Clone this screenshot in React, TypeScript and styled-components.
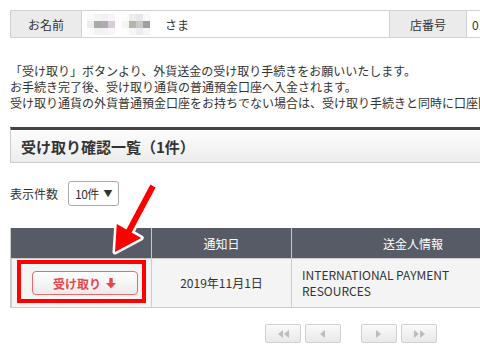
import styled, { createGlobalStyle } from "styled-components";

const GlobalStyle = createGlobalStyle`
  html, body {
    margin: 0;
    padding: 0;
    background: #fff;
    overflow: hidden;
  }
  body {
    font-family: "Noto Sans CJK JP", "Noto Sans", sans-serif;
    font-size: 12px;
    color: #333;
  }
`;

const Page = styled.div`
  position: relative;
  width: 682px;
  padding: 10px 0 0 10px;
`;

const InfoTable = styled.div`
  display: grid;
  grid-template-columns: 70px 308px 77px 1fr;
  height: 28px;
  border: 1px solid #d2d2d2;
  box-sizing: border-box;
`;

const InfoCell = styled.div<{ $head?: boolean }>`
  display: flex;
  align-items: center;
  justify-content: ${(p) => (p.$head ? "center" : "flex-start")};
  padding: ${(p) => (p.$head ? "0" : "0 5px")};
  background: ${(p) => (p.$head ? "#ebebeb" : "#fff")};
  border-left: 1px solid #d2d2d2;
  font-size: 12px;
  color: #333;
  &:first-child {
    border-left: none;
  }
`;

const Mosaic = styled.div`
  display: grid;
  grid-template-columns: repeat(4, 7px);
  grid-template-rows: repeat(3, 7px);
  margin-right: 7px;
`;

const Pixel = styled.span<{ $c: string }>`
  background: ${(p) => p.$c};
`;

const Notice = styled.p`
  margin: 25px 0 0;
  font-size: 12px;
  line-height: 16px;
  white-space: nowrap;
  color: #333;
`;

const SectionHeader = styled.div`
  margin-top: 16px;
  height: 36px;
  box-sizing: border-box;
  border-top: 3px solid #444;
  border-left: 1px solid #ccc;
  border-right: 1px solid #ccc;
  border-bottom: 1px solid #ccc;
  background: linear-gradient(#fdfdfd, #ececec);
  display: flex;
  align-items: center;
  padding-left: 10px;
  font-size: 15px;
  font-weight: bold;
  color: #333;
`;

const Controls = styled.div`
  display: flex;
  align-items: center;
  gap: 10px;
  margin-top: 18px;
  height: 25px;
`;

const FakeSelect = styled.div`
  width: 51px;
  height: 25px;
  box-sizing: border-box;
  border: 1px solid #aaa;
  border-radius: 3px;
  display: flex;
  align-items: center;
  justify-content: space-between;
  padding: 0 6px 0 6px;
  font-size: 12px;
  letter-spacing: -0.5px;
  color: #333;
  background: #fff;
`;

const Caret = styled.span`
  font-size: 9px;
  color: #333;
`;

const Table = styled.div`
  margin-top: 22px;
  display: grid;
  grid-template-columns: 140px 140px 243px 1fr;
  border: 1px solid #ccc;
  border-top: none;
`;

const HeadCell = styled.div`
  height: 30px;
  background: #565b66;
  color: #fff;
  display: flex;
  align-items: center;
  justify-content: center;
  font-size: 12px;
  border-left: 1px solid #c8c8c8;
  &:first-child {
    border-left: none;
  }
`;

const BodyCell = styled.div<{ $align?: string }>`
  height: 48px;
  background: #f4f4f4;
  display: flex;
  align-items: center;
  justify-content: ${(p) => p.$align || "center"};
  padding: ${(p) => (p.$align === "flex-start" ? "0 10px" : "0")};
  border-left: 1px solid #ccc;
  border-top: 1px solid #ccc;
  font-size: 12px;
  line-height: 16px;
  color: #333;
  &:first-child {
    border-left: none;
  }
`;

const ReceiveButton = styled.button`
  width: 106px;
  height: 24px;
  margin-left: 6px;
  border: 1px solid #e86a6a;
  border-radius: 4px;
  background: linear-gradient(#ffffff, #ebebeb);
  color: #e6484b;
  font-family: inherit;
  font-size: 12px;
  font-weight: bold;
  display: flex;
  align-items: center;
  justify-content: center;
  gap: 5px;
  cursor: pointer;
`;

const Pager = styled.div`
  display: flex;
  justify-content: center;
  gap: 4px;
  margin-top: 16px;
`;

const PagerGap = styled.span`
  width: 12px;
`;

const PageButton = styled.div`
  width: 36px;
  height: 19px;
  box-sizing: border-box;
  border: 1px solid #d0d0d0;
  border-radius: 2px;
  background: linear-gradient(#fafafa, #e9e9e9);
  display: flex;
  align-items: center;
  justify-content: center;
`;

const Overlay = styled.svg`
  position: absolute;
  left: 0;
  top: 0;
  pointer-events: none;
`;

const mosaicA = [
  "#fafafa", "#f4f4f4", "#f2f0f2", "#f6f4f6",
  "#ececec", "#a9a9a9", "#b2aab2", "#d9ccd9",
  "#fbfbfb", "#f2f2f2", "#f4f2f4", "#f8f6f8",
];
const mosaicB = [
  "#fcfcfc", "#eeeeea", "#e8e8e8", "#f6f8fa",
  "#f4f4f4", "#b6b6a6", "#c9c9c9", "#9f9f9f",
  "#fdfdfd", "#f6f4f4", "#ededed", "#f4f6f8",
];

function ArrowDown() {
  return (
    <svg width="10" height="11" viewBox="0 0 10 11">
      <rect x="3.3" y="0" width="3.4" height="5.5" fill="#e6484b" />
      <polygon points="0,5 10,5 5,10.5" fill="#e6484b" />
    </svg>
  );
}

function Tri({ dir, double }: { dir: "l" | "r"; double?: boolean }) {
  const one = (x: number) =>
    dir === "l"
      ? `${x + 5},0 ${x + 5},8 ${x},4`
      : `${x},0 ${x},8 ${x + 5},4`;
  return (
    <svg width={double ? 11 : 6} height="8" viewBox={`0 0 ${double ? 11 : 6} 8`}>
      <polygon points={one(0)} fill="#bdbdbd" />
      {double && <polygon points={one(6)} fill="#bdbdbd" />}
    </svg>
  );
}

export default function App() {
  return (
    <>
      <GlobalStyle />
      <Page>
        <InfoTable>
          <InfoCell $head>お名前</InfoCell>
          <InfoCell>
            <Mosaic>
              {mosaicA.map((c, i) => (
                <Pixel key={i} $c={c} />
              ))}
            </Mosaic>
            <Mosaic>
              {mosaicB.map((c, i) => (
                <Pixel key={i} $c={c} />
              ))}
            </Mosaic>
            <span style={{ marginLeft: 8 }}>さま</span>
          </InfoCell>
          <InfoCell $head>店番号</InfoCell>
          <InfoCell>0123</InfoCell>
        </InfoTable>

        <Notice>
          「受け取り」ボタンより、外貨送金の受け取り手続きをお願いいたします。
          <br />
          お手続き完了後、受け取り通貨の普通預金口座へ入金されます。
          <br />
          受け取り通貨の外貨普通預金口座をお持ちでない場合は、受け取り手続きと同時に口座開設をお願いします。
        </Notice>

        <SectionHeader>受け取り確認一覧（1件）</SectionHeader>

        <Controls>
          <span>表示件数</span>
          <FakeSelect>
            10件 <Caret>▼</Caret>
          </FakeSelect>
        </Controls>

        <Table>
          <HeadCell />
          <HeadCell>通知日</HeadCell>
          <HeadCell>送金人情報</HeadCell>
          <HeadCell>金額</HeadCell>
          <BodyCell>
            <ReceiveButton>
              受け取り
              <ArrowDown />
            </ReceiveButton>
          </BodyCell>
          <BodyCell>2019年11月1日</BodyCell>
          <BodyCell $align="flex-start">
            INTERNATIONAL PAYMENT
            <br />
            RESOURCES
          </BodyCell>
          <BodyCell>USD 100.00</BodyCell>
        </Table>

        <Pager>
          <PageButton>
            <Tri dir="l" double />
          </PageButton>
          <PageButton>
            <Tri dir="l" />
          </PageButton>
          <PagerGap />
          <PageButton>
            <Tri dir="r" />
          </PageButton>
          <PageButton>
            <Tri dir="r" double />
          </PageButton>
        </Pager>

        <Overlay width="480" height="360" viewBox="0 0 480 360">
          <polygon
            points="150.4,184.5 155.6,187.5 131.6,232.5 141.2,238 115,252 116.8,224 126.4,229.5"
            fill="#ff0000"
            stroke="#fff"
            strokeWidth="5"
            strokeLinejoin="round"
            paintOrder="stroke"
          />
          <rect x="19" y="262" width="125" height="39" fill="none" stroke="#ff0000" strokeWidth="4" />
        </Overlay>
      </Page>
    </>
  );
}
